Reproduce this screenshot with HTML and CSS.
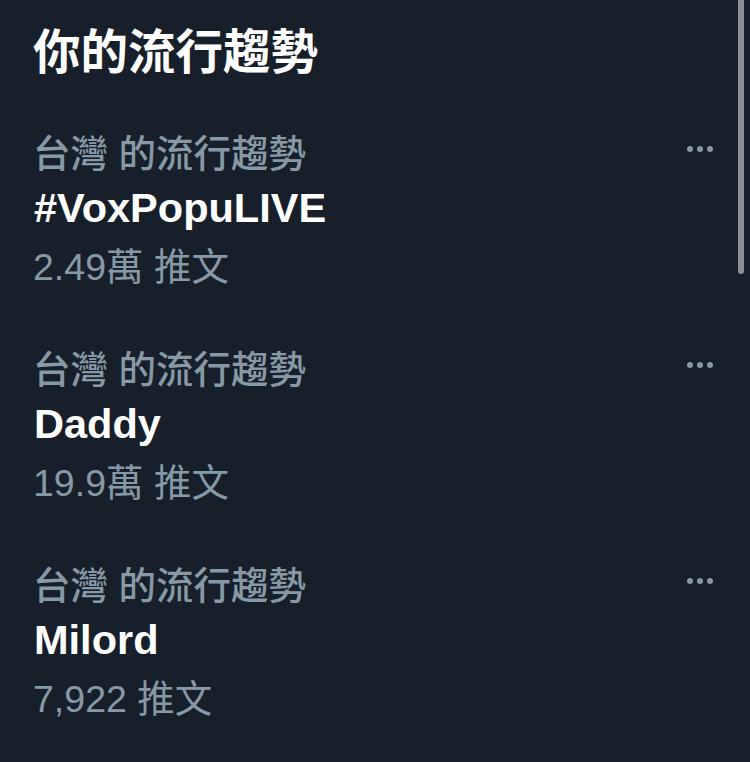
FILE: index.html
```html
<!DOCTYPE html>
<html lang="zh-Hant">
<head>
<meta charset="utf-8">
<link rel="stylesheet" href="styles.css">
</head>
<body>
<div class="page">
  <h1 class="heading">你的流行趨勢</h1>
  <div class="list">
    <div class="trend">
      <div class="meta"><span>台灣 的流行趨勢</span><span class="more"><i></i><i></i><i></i></span></div>
      <div class="name">#VoxPopuLIVE</div>
      <div class="count">2.49萬 推文</div>
    </div>
    <div class="trend">
      <div class="meta"><span>台灣 的流行趨勢</span><span class="more"><i></i><i></i><i></i></span></div>
      <div class="name">Daddy</div>
      <div class="count">19.9萬 推文</div>
    </div>
    <div class="trend">
      <div class="meta"><span>台灣 的流行趨勢</span><span class="more"><i></i><i></i><i></i></span></div>
      <div class="name">Milord</div>
      <div class="count">7,922 推文</div>
    </div>
  </div>
  <div class="scrollbar"></div>
</div>
</body>
</html>
```
FILE: styles.css
```css
html, body {
  margin: 0;
  padding: 0;
  background: #17202a;
}
.page {
  position: relative;
  width: 750px;
  height: 762px;
  overflow: hidden;
  box-sizing: border-box;
  padding: 20px 36px 0 33px;
  font-family: "Liberation Sans", "Noto Sans CJK TC", sans-serif;
  display: flex;
  flex-direction: column;
  gap: 43px;
}
.heading {
  margin: 0;
  font-size: 47.5px;
  line-height: 58px;
  font-weight: 700;
  color: #ffffff;
  font-family: "Noto Sans CJK TC", sans-serif;
}
.list {
  display: flex;
  flex-direction: column;
  gap: 42px;
}
.trend {
  display: flex;
  flex-direction: column;
}
.meta {
  display: flex;
  justify-content: space-between;
  align-items: center;
  height: 58px;
  font-size: 37.5px;
  font-weight: 500;
  color: #8899a6;
  font-family: "Liberation Sans", "Noto Sans CJK TC", sans-serif;
}
.more {
  display: flex;
  gap: 4px;
  margin-right: 1px;
  margin-top: -2px;
}
.more i {
  display: block;
  width: 6px;
  height: 6px;
  border-radius: 50%;
  background: #8899a6;
}
.name {
  height: 58px;
  line-height: 58px;
  font-size: 41.5px;
  font-weight: 700;
  color: #ffffff;
  padding-left: 1px;
}
.count {
  height: 58px;
  line-height: 60px;
  font-size: 37.5px;
  color: #8899a6;
}
.scrollbar {
  position: absolute;
  top: 0;
  left: 738px;
  width: 6px;
  height: 274px;
  border-radius: 0 0 3px 3px;
  background: #8a9096;
}
```
